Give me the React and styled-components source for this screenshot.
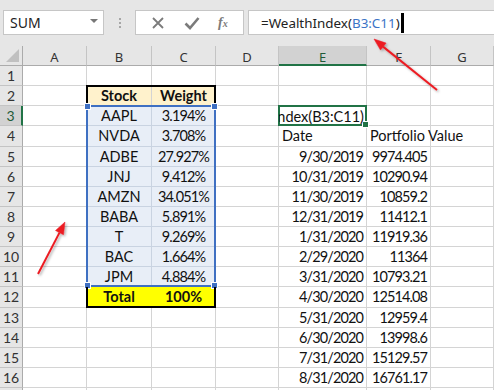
import React from 'react';
import styled, { createGlobalStyle } from 'styled-components';

const GlobalStyle = createGlobalStyle`
  body {
    margin: 0;
    background: #ffffff;
  }
`;

const Window = styled.div`
  width: 494px;
  height: 390px;
  overflow: hidden;
  position: relative;
  background: #e6e6e6;
  font-family: Lato, "Liberation Sans", sans-serif;
`;

const TopBar = styled.div`
  height: 46px;
  box-sizing: border-box;
  padding: 10px 0 0 3px;
  display: flex;
  align-items: flex-start;
`;

const NameBox = styled.div`
  width: 101px;
  height: 25px;
  box-sizing: border-box;
  background: #fff;
  border: 1px solid #c6c6c6;
  display: flex;
  align-items: center;
  justify-content: space-between;
  padding: 0 5px 0 6px;
  font-family: "Noto Sans", "Open Sans", sans-serif;
  font-size: 14px;
  color: #222;
`;

const DropArrow = styled.span`
  width: 0;
  height: 0;
  border-left: 4px solid transparent;
  border-right: 4px solid transparent;
  border-top: 4px solid #777;
  margin-top: -3px;
`;

const Grip = styled.div`
  width: 31px;
  height: 25px;
  display: flex;
  flex-direction: column;
  align-items: center;
  justify-content: center;
  gap: 2px;

  span {
    width: 2px;
    height: 2px;
    background: #a6a6a6;
  }
`;

const FxButtons = styled.div`
  width: 109px;
  height: 25px;
  box-sizing: border-box;
  background: #fff;
  border: 1px solid #c6c6c6;
  display: flex;
  align-items: center;
  justify-content: space-around;
  padding: 0 6px;
  color: #7b7b7b;
`;

const FxGlyph = styled.span`
  font-family: "Liberation Serif", serif;
  font-style: italic;
  font-weight: bold;
  font-size: 14px;
  color: #7b7b7b;

  sub {
    font-size: 10px;
    vertical-align: 0;
  }
`;

const FormulaInput = styled.div`
  margin-left: 4px;
  flex: 1;
  height: 25px;
  box-sizing: border-box;
  background: #fff;
  border: 1px solid #c6c6c6;
  border-right: none;
  display: flex;
  align-items: center;
  padding-left: 12px;
  font-family: "Noto Sans", "Open Sans", sans-serif;
  font-size: 13.4px;
  color: #222;
  white-space: nowrap;
`;

const Ref = styled.span`
  color: #3b74c6;
`;

const Caret = styled.span`
  display: inline-block;
  width: 3px;
  height: 20px;
  background: #000;
  margin-left: 1px;
`;

const Sheet = styled.div`
  display: grid;
  grid-template-columns: 23px 64px 65px 64px 63px 88px 64px 1fr;
  grid-template-rows: 20px repeat(17, 20.125px);
  background: #fff;
  font-size: 14.5px;
  color: #111;
`;

const ColHead = styled.div`
  grid-row: 1;
  grid-column: ${(p) => p.$c};
  box-sizing: border-box;
  background: ${(p) => (p.$active ? '#d2d2d2' : '#e6e6e6')};
  border-right: 1px solid #c4c4c4;
  border-bottom: ${(p) => (p.$active ? '2px solid #217346' : '1px solid #ababab')};
  display: flex;
  align-items: center;
  justify-content: center;
  padding-top: 3px;
  font-family: "Noto Sans", sans-serif;
  font-size: 13px;
  color: ${(p) => (p.$active ? '#1f5a38' : '#333')};
`;

const Corner = styled.div`
  grid-row: 1;
  grid-column: 1;
  box-sizing: border-box;
  background: #e6e6e6;
  border-right: 1px solid #ababab;
  border-bottom: 1px solid #ababab;
  position: relative;

  &::after {
    content: '';
    position: absolute;
    right: 3px;
    bottom: 3px;
    border-left: 13px solid transparent;
    border-bottom: 13px solid #c0c0c0;
  }
`;

const RowHead = styled.div`
  grid-row: ${(p) => p.$r + 1};
  grid-column: 1;
  box-sizing: border-box;
  background: ${(p) => (p.$active ? '#d2d2d2' : '#e6e6e6')};
  border-right: ${(p) => (p.$active ? '2px solid #217346' : '1px solid #ababab')};
  border-bottom: 1px solid #c4c4c4;
  display: flex;
  align-items: center;
  justify-content: center;
  font-size: 14px;
  color: ${(p) => (p.$active ? '#1f5a38' : '#333')};
`;

const Cell = styled.div`
  grid-row: ${(p) => p.$r + 1};
  grid-column: ${(p) => p.$c};
  box-sizing: border-box;
  min-width: 0;
  background: ${(p) => p.$bg || '#fff'};
  border-right: 1px solid ${(p) => p.$line || '#d4d4d4'};
  border-bottom: 1px solid ${(p) => p.$line || '#d4d4d4'};
  display: flex;
  align-items: center;
  justify-content: ${(p) => p.$align || 'flex-start'};
  padding: 0 3px;
  font-weight: ${(p) => (p.$bold ? 700 : 400)};
  letter-spacing: ${(p) => (p.$num ? '-0.9px' : '0')};
  white-space: nowrap;
  overflow: ${(p) => (p.$spill ? 'visible' : 'hidden')};
  position: relative;
  z-index: ${(p) => (p.$spill ? 1 : 0)};
`;

const Frame = styled.div`
  grid-row: ${(p) => p.$rows};
  grid-column: ${(p) => p.$cols};
  box-sizing: border-box;
  margin: -1px 0 0 -1px;
  border: 2px solid ${(p) => p.$color};
  ${(p) => p.$noTop && 'border-top: none; margin-top: 0;'}
  ${(p) => p.$noBottom && 'border-bottom: none;'}
  position: relative;
  z-index: 2;
  pointer-events: none;
`;

const Handle = styled.span`
  position: absolute;
  width: 5px;
  height: 5px;
  background: ${(p) => p.$color};
  border: 1px solid #fff;
  ${(p) => (p.$top ? 'top: -4px;' : 'bottom: -4px;')}
  ${(p) => (p.$left ? 'left: -4px;' : 'right: -4px;')}
`;

const ActiveText = styled.div`
  grid-row: 4;
  grid-column: 6;
  box-sizing: border-box;
  min-width: 0;
  overflow: hidden;
  display: flex;
  align-items: center;
  justify-content: flex-end;
  padding: 0 3px 0 2px;
  white-space: nowrap;
  z-index: 3;
`;

const Arrows = styled.svg`
  position: absolute;
  left: 0;
  top: 0;
  pointer-events: none;
  z-index: 5;
`;

const stocks = [
  ['AAPL', '3.194%'],
  ['NVDA', '3.708%'],
  ['ADBE', '27.927%'],
  ['JNJ', '9.412%'],
  ['AMZN', '34.051%'],
  ['BABA', '5.891%'],
  ['T', '9.269%'],
  ['BAC', '1.664%'],
  ['JPM', '4.884%'],
];

const values = [
  ['9/30/2019', '9974.405'],
  ['10/31/2019', '10290.94'],
  ['11/30/2019', '10859.2'],
  ['12/31/2019', '11412.1'],
  ['1/31/2020', '11919.36'],
  ['2/29/2020', '11364'],
  ['3/31/2020', '10793.21'],
  ['4/30/2020', '12514.08'],
  ['5/31/2020', '12959.4'],
  ['6/30/2020', '13998.6'],
  ['7/31/2020', '15129.57'],
  ['8/31/2020', '16761.17'],
];

const letters = ['A', 'B', 'C', 'D', 'E', 'F', 'G'];
const ROWS = 17;

function cellFor(r, c) {
  // c: 2 = A ... 8 = G
  if (r === 2 && c === 3) return { text: 'Stock', bold: true, align: 'center', bg: '#fff2cc' };
  if (r === 2 && c === 4) return { text: 'Weight', bold: true, align: 'center', bg: '#fff2cc' };
  if (r >= 3 && r <= 11 && (c === 3 || c === 4)) {
    const s = stocks[r - 3];
    return { text: c === 3 ? s[0] : s[1], num: c === 4, align: 'center', bg: '#e8eef7', line: '#c9d3e1' };
  }
  if (r === 12 && c === 3) return { text: 'Total', bold: true, align: 'center', bg: '#ffff00', line: '#ffff00' };
  if (r === 12 && c === 4) return { text: '100%', bold: true, align: 'center', bg: '#ffff00' };
  if (r === 4 && c === 6) return { text: 'Date' };
  if (r === 4 && c === 7) return { text: 'Portfolio Value', spill: true };
  if (r >= 5 && r <= 16 && (c === 6 || c === 7)) {
    const v = values[r - 5];
    return { text: c === 6 ? v[0] : v[1], num: true, align: 'flex-end' };
  }
  return { text: '' };
}

export default function App() {
  const rows = [];
  for (let r = 1; r <= ROWS; r++) {
    rows.push(
      <RowHead key={'h' + r} $r={r} $active={r === 3}>
        {r}
      </RowHead>
    );
    for (let c = 2; c <= 8; c++) {
      const d = cellFor(r, c);
      rows.push(
        <Cell
          key={r + '-' + c}
          $r={r}
          $c={c}
          $bg={d.bg}
          $bold={d.bold}
          $align={d.align}
          $line={d.line}
          $spill={d.spill}
          $num={d.num}
        >
          {d.text}
        </Cell>
      );
    }
  }

  return (
    <Window>
      <GlobalStyle />
      <TopBar>
        <NameBox>
          SUM
          <DropArrow />
        </NameBox>
        <Grip>
          <span />
          <span />
          <span />
        </Grip>
        <FxButtons>
          <svg width="14" height="14" viewBox="0 0 14 14">
            <path d="M2 2 L12 12 M12 2 L2 12" stroke="#7b7b7b" strokeWidth="1.8" />
          </svg>
          <svg width="16" height="14" viewBox="0 0 16 14">
            <path d="M1.5 7.5 L6 12 L14.5 2" stroke="#7b7b7b" strokeWidth="2.6" fill="none" />
          </svg>
          <FxGlyph>
            f<sub>x</sub>
          </FxGlyph>
        </FxButtons>
        <FormulaInput>
          =WealthIndex(<Ref>B3:C11</Ref>)
          <Caret />
        </FormulaInput>
      </TopBar>

      <Sheet>
        <Corner />
        {letters.map((l, i) => (
          <ColHead key={l} $c={i + 2} $active={l === 'E'}>
            {l}
          </ColHead>
        ))}
        {rows}

        <Frame $rows="3" $cols="3 / 5" $color="#000" $noBottom />
        <Frame $rows="4 / 13" $cols="3 / 5" $color="#3f70c2">
          <Handle $color="#3f70c2" $top $left />
          <Handle $color="#3f70c2" $top />
          <Handle $color="#3f70c2" $left />
          <Handle $color="#3f70c2" />
        </Frame>
        <Frame $rows="13" $cols="3 / 5" $color="#000" $noTop />
        <Frame $rows="4" $cols="6" $color="#217346">
          <Handle $color="#217346" />
        </Frame>
        <ActiveText>=WealthIndex(B3:C11)</ActiveText>
      </Sheet>

      <Arrows width="494" height="390">
        <defs>
          <filter id="sh" x="-20%" y="-20%" width="140%" height="140%">
            <feDropShadow dx="1.5" dy="1.5" stdDeviation="1.2" floodColor="#000" floodOpacity="0.3" />
          </filter>
        </defs>
        <g fill="#ec1c24" stroke="#ec1c24" filter="url(#sh)">
          <line x1="437" y1="90" x2="383" y2="46.6" strokeWidth="2" />
          <polygon points="374,39 386.1,43.1 380.5,50.1" strokeWidth="0.5" />
          <line x1="38" y1="274" x2="59.5" y2="232.6" strokeWidth="2" />
          <polygon points="65,222 63.5,234.7 55.5,230.5" strokeWidth="0.5" />
        </g>
      </Arrows>
    </Window>
  );
}
